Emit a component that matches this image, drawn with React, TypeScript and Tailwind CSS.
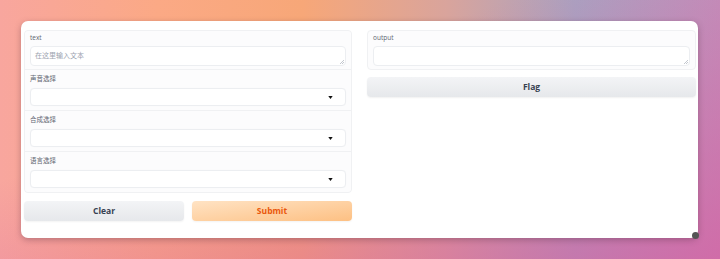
import React from "react";

const Caret = () => (
  <svg width="5" height="3" viewBox="0 0 5 3" className="block">
    <path d="M0.3 0 L4.7 0 L2.5 3 Z" fill="#111" />
  </svg>
);

const ResizeHandle = () => (
  <svg width="4" height="4" viewBox="0 0 4 4" className="absolute right-[1px] bottom-[1px]">
    <path d="M4 0 L0 4 M4 2 L2 4" stroke="#9ca3af" strokeWidth="0.6" />
  </svg>
);

const Dropdown = () => (
  <div className="h-[18px] w-full rounded-[4px] border border-[#eceef1] bg-white flex items-center justify-end pr-[12px] shadow-[0_0_1px_rgba(0,0,0,0.04)]">
    <Caret />
  </div>
);

const Label = ({ children }: { children: React.ReactNode }) => (
  <div className="h-[8px] leading-[8px] text-[6.5px] text-[#5f6671]">{children}</div>
);

export default function App() {
  return (
    <div
      className="w-[720px] h-[259px] overflow-hidden pt-[21px] pl-[21px] bg-[linear-gradient(to_bottom_right,rgba(230,100,150,0)_35%,rgba(215,92,160,0.7)_100%),linear-gradient(to_right,#f8a69e_0%,#fba985_22%,#f7a778_42%,#d9a49c_62%,#a9a2c1_80%,#c093bc_100%)]"
      style={{ fontFamily: '"Open Sans","Noto Sans","Noto Sans CJK SC",sans-serif' }}
    >
      <div className="relative w-[677px] h-[217px] bg-white rounded-[7px] shadow-[0_2px_6px_rgba(80,40,60,0.35)] flex gap-[15px] pl-[3px] pt-[9px]">
        {/* left column */}
        <div className="w-[328px] flex flex-col gap-[8px]">
          <div className="flex flex-col gap-px bg-[#f0f1f3] border border-[#f0f1f3] rounded-[4px] overflow-hidden">
            <div className="bg-[#fcfcfd] px-[5px] pt-[3px] pb-[3px] flex flex-col gap-[4px]">
              <Label>text</Label>
              <div className="relative h-[20px] rounded-[4px] border border-[#eceef1] bg-white px-[4px] flex items-center">
                <span className="text-[7px] text-[#9ca3af]">在这里输入文本</span>
                <ResizeHandle />
              </div>
            </div>
            {["声音选择", "合成选择", "语言选择"].map((l) => (
              <div key={l} className="bg-[#fcfcfd] px-[5px] pt-[5px] pb-[4px] flex flex-col gap-[5px]">
                <Label>{l}</Label>
                <Dropdown />
              </div>
            ))}
          </div>
          <div className="flex gap-[8px]">
            <button className="flex-1 h-[20px] rounded-[4px] bg-[linear-gradient(to_bottom,#f3f4f6,#e6e8eb)] text-[8.5px] font-bold text-[#374151] shadow-[0_1px_2px_rgba(0,0,0,0.05)]">
              Clear
            </button>
            <button className="flex-1 h-[20px] rounded-[4px] bg-[linear-gradient(to_bottom_right,#ffe3c4,#fdc083)] text-[8.5px] font-bold text-[#ea580c] shadow-[0_1px_2px_rgba(0,0,0,0.05)]">
              Submit
            </button>
          </div>
        </div>
        {/* right column */}
        <div className="w-[329px] flex flex-col gap-[7px]">
          <div className="bg-[#fcfcfd] border border-[#f0f1f3] rounded-[4px] px-[5px] pt-[3px] pb-[3px] flex flex-col gap-[4px]">
            <Label>output</Label>
            <div className="relative h-[20px] rounded-[4px] border border-[#eceef1] bg-white">
              <ResizeHandle />
            </div>
          </div>
          <button className="h-[20px] rounded-[4px] bg-[linear-gradient(to_bottom,#f3f4f6,#e6e8eb)] text-[8.5px] font-bold text-[#374151] shadow-[0_1px_2px_rgba(0,0,0,0.06)]">
            Flag
          </button>
        </div>
        <div className="absolute right-[-1px] bottom-[-1px] w-[7px] h-[7px] rounded-full bg-[#555]" />
      </div>
    </div>
  );
}
